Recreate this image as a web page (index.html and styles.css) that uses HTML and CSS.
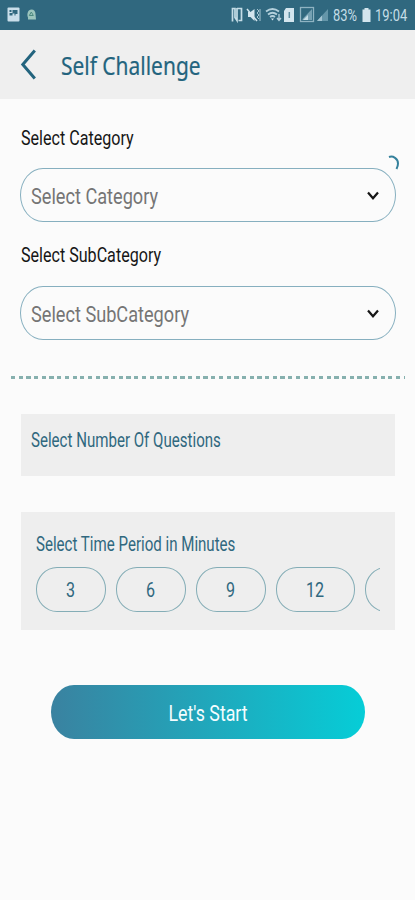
FILE: index.html
```html
<!DOCTYPE html>
<html lang="en">
  <head>
    <meta charset="utf-8">
    <meta name="viewport" content="width=device-width,initial-scale=1.0">
    <title>Self Challenge</title>
    <link rel="stylesheet" href="styles.css">
  </head>
  <body>
    <div class="statusbar">
      <svg class="status-icons-left" width="40" height="30" viewBox="0 0 40 30">
        <rect x="7.500" y="7.500" width="12" height="14" rx="1" fill="#c9deea"/>
        <path d="M9.500 10h2v2h-2zM12.500 10h5v4h-2v1.500h-1v-2h-2v2h-3v-2.500h3z" fill="#30687f"/>
        <path d="M31.500 9.500c2.500 0 4 2 4 4.500l.500 5.500h-8v-2c-1.500-3.500 0-8 3.500-8z" fill="#9cc5bd"/>
        <path d="M31.300 12l2 3.500h-4z" fill="none" stroke="#4d8a80"/>
      </svg>
      <svg class="status-icons" width="104" height="30" viewBox="0 0 104 30">
        <!-- nfc -->
        <path d="M3.500 21.500V8.500h2.500v9l2 3V8" fill="none" stroke="#c5dde7" stroke-width="1.700"/>
        <path d="M8 8.500h4.500V20.500H9.500" fill="none" stroke="#c5dde7" stroke-width="1.700"/>
        <!-- muted -->
        <path d="M19 12h2.500l4-3v12l-4-4H19z" fill="#d3e5ee"/>
        <path d="M18 9l10 12" stroke="#d3e5ee" stroke-width="1.500"/>
        <path d="M28 9l2 2-2 2 2 2-2 2 2 2M31 9v12" fill="none" stroke="#a5c5d3"/>
        <!-- wifi -->
        <path d="M37 11.500q6.500-5 13 0M39 14.500q4.500-3.500 9 0M41 17q2.500-2 5 0" fill="none" stroke="#b3d0dc" stroke-width="1.800"/>
        <path d="M42 18.500h3l-1.500 2z" fill="#d3e5ee"/>
        <path d="M50 14v6M48 18l2 2.500 2-2.500" fill="none" stroke="#b3d0dc" stroke-width="1.300"/>
        <!-- sim -->
        <path d="M57 8h8v14H55V11z" fill="#d3e5ee"/>
        <path d="M60.300 12v6" fill="none" stroke="#5d8da1" stroke-width="1.500"/>
        <!-- signal -->
        <rect x="71.500" y="7.500" width="13" height="14" fill="none" stroke="#8fb3c2" stroke-width="1.300"/>
        <path d="M73.500 20v-1l9.500-10v11z" fill="#76a1b3"/>
        <path d="M74 20l5-5v5z" fill="#c5dde7"/>
        <path d="M88 21l11-12v12z" fill="#6596a9"/>
        <path d="M88 21l5-5.500V21z" fill="#a5c5d3"/>
      </svg>
      <span class="status-text battery-level"><span class="narrow">83%</span></span>
      <svg class="battery" width="9" height="15" viewBox="0 0 9 15">
        <path d="M2.500 1.500V0h4v1.500H8.500V14H.5V1.500z" fill="#d3e5ee"/>
      </svg>
      <span class="status-text clock"><span class="narrow">19:04</span></span>
    </div>

    <header class="header">
      <svg class="back" width="16" height="32" viewBox="0 0 16 32">
        <path d="M14.800 1.500L2.800 15.500l12 14" fill="none" stroke="#23647e" stroke-width="3"/>
      </svg>
      <h1 class="title narrow">Self Challenge</h1>
    </header>

    <main class="content">
      <div class="field">
        <label class="label"><span class="narrow">Select Category</span></label>
        <svg class="spinner" width="12" height="16" viewBox="0 0 12 16">
          <path d="M1 2C5 .500 10 3.500 10 8.500c0 2-.500 3.500-1.500 5.500" fill="none" stroke="#35819c" stroke-width="2"/>
        </svg>
        <div class="select">
          <span class="narrow">Select Category</span>
          <svg width="14" height="10" viewBox="0 0 14 10">
            <path d="M2 1.500l5 5.800 5-5.800" fill="none" stroke="#161616" stroke-width="2.200"/>
          </svg>
        </div>
      </div>
      <div class="field">
        <label class="label"><span class="narrow">Select SubCategory</span></label>
        <div class="select">
          <span class="narrow">Select SubCategory</span>
          <svg width="14" height="10" viewBox="0 0 14 10">
            <path d="M2 1.500l5 5.800 5-5.800" fill="none" stroke="#161616" stroke-width="2.200"/>
          </svg>
        </div>
      </div>

      <div class="divider"></div>

      <section class="panel questions">
        <span class="narrow">Select Number Of Questions</span>
      </section>

      <section class="panel period">
        <span class="narrow">Select Time Period in Minutes</span>
        <div class="chips">
          <div class="chip"><span class="narrow">3</span></div>
          <div class="chip"><span class="narrow">6</span></div>
          <div class="chip"><span class="narrow">9</span></div>
          <div class="chip wide"><span class="narrow">12</span></div>
          <div class="chip wide"></div>
        </div>
      </section>

      <button class="start"><span class="narrow">Let's Start</span></button>
    </main>
  </body>
</html>
```
FILE: styles.css
```css
* {
  box-sizing: border-box;
}

body {
  margin: 0;
  height: 900px;
  overflow: hidden;
  background: #fbfbfb;
  font-family: Roboto, sans-serif;
}

/* Condensed look for all the text */
.narrow {
  display: inline-block;
  white-space: nowrap;
  transform: scaleX(0.825);
  transform-origin: left center;
}

.statusbar {
  display: flex;
  align-items: center;
  height: 30px;
  background: #30687f;
}

.status-icons {
  margin-left: 189px;
}

.status-text {
  font-size: 17px;
  line-height: 30px;
  color: #c5dde7;
}

.status-text .narrow {
  transform: scaleX(0.76);
}

.battery-level {
  width: 29px;
}

.clock {
  width: 35px;
  margin-left: 4px;
}

.battery {
  flex: none;
}

.header {
  display: flex;
  align-items: center;
  height: 69px;
  padding-left: 20px;
  background: #efefef;
}

.title {
  margin: 2px 0 0 25px;
  font-family: "Noto Sans", sans-serif;
  font-size: 24.5px;
  font-weight: 400;
  line-height: 34px;
  color: #23647e;
  -webkit-text-stroke: 0.2px #23647e;
}

.title.narrow {
  transform: scaleX(0.855);
}

.content {
  padding: 28px 19px 0 20px;
}

.field {
  position: relative;
  margin-bottom: 22px;
}

.label {
  display: block;
  height: 41px;
  padding-left: 0.5px;
  font-size: 19.5px;
  line-height: 24px;
  color: #161616;
}

.spinner {
  position: absolute;
  top: 28px;
  right: -4px;
}

.select {
  display: flex;
  align-items: center;
  justify-content: space-between;
  height: 54px;
  padding: 2px 15px 0 9.5px;
  border: 1.5px solid #86afbf;
  border-radius: 23px / 27px;
  font-size: 22px;
  color: #757575;
}

.field + .field .label {
  height: 42px;
}

.divider {
  height: 2.5px;
  margin: 36px -9px 0;
  background: repeating-linear-gradient(90deg, #86b0ae 0 4.2px, transparent 4.2px 7.7px);
}

.panel {
  margin: 0 1px;
  background: #eee;
  font-size: 19.5px;
  line-height: 24px;
  color: #30687f;
}

.panel > .narrow {
  transform: scaleX(0.773);
}

.questions {
  height: 62px;
  margin-top: 35.5px;
  padding: 15px 9.5px;
}

.period {
  height: 118px;
  margin-top: 36px;
  padding: 21px 15px 0 14.5px;
}

.chips {
  display: flex;
  gap: 9.5px;
  margin-top: 10px;
  overflow: hidden;
}

.chip {
  display: flex;
  flex: none;
  align-items: center;
  justify-content: center;
  width: 70.5px;
  height: 45px;
  padding-top: 2px;
  border: 1.5px solid #84adb6;
  border-radius: 21px / 22px;
}

.chip .narrow,
.start .narrow {
  transform-origin: center;
}

.start .narrow {
  transform: scaleX(0.79);
}

.chip.wide {
  width: 79.5px;
}

.start {
  display: block;
  width: 314px;
  height: 54px;
  margin: 55px 0 0 31px;
  padding: 2px 0 0;
  border: none;
  border-radius: 23px / 27px;
  background: linear-gradient(90deg, #3a82a0, #06cdd7);
  font-family: inherit;
  font-size: 22.5px;
  color: #f4fdff;
}
```
